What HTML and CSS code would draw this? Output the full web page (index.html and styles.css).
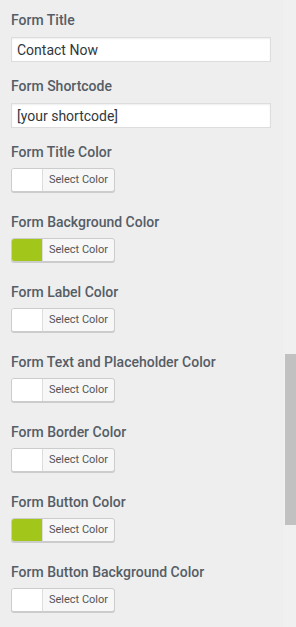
FILE: index.html
```html
<!DOCTYPE html>
<html lang="en">
<head>
    <meta charset="UTF-8">
    <meta name="viewport" content="width=device-width, initial-scale=1.0">
    <title>Form Settings</title>
    <link rel="stylesheet" href="styles.css">
</head>
<body>
    <div class="panel">
        <div class="settings">
            <div class="field">
                <label class="field-label">Form Title</label>
                <input type="text" class="text-input" value="Contact Now">
            </div>
            <div class="field">
                <label class="field-label">Form Shortcode</label>
                <input type="text" class="text-input" value="[your shortcode]">
            </div>

            <div class="field color-field">
                <label class="field-label">Form Title Color</label>
                <button type="button" class="color-btn"><span class="swatch"></span><span class="btn-text">Select Color</span></button>
            </div>
            <div class="field color-field">
                <label class="field-label">Form Background Color</label>
                <button type="button" class="color-btn"><span class="swatch green"></span><span class="btn-text">Select Color</span></button>
            </div>
            <div class="field color-field">
                <label class="field-label">Form Label Color</label>
                <button type="button" class="color-btn"><span class="swatch"></span><span class="btn-text">Select Color</span></button>
            </div>
            <div class="field color-field">
                <label class="field-label">Form Text and Placeholder Color</label>
                <button type="button" class="color-btn"><span class="swatch"></span><span class="btn-text">Select Color</span></button>
            </div>
            <div class="field color-field">
                <label class="field-label">Form Border Color</label>
                <button type="button" class="color-btn"><span class="swatch"></span><span class="btn-text">Select Color</span></button>
            </div>
            <div class="field color-field">
                <label class="field-label">Form Button Color</label>
                <button type="button" class="color-btn"><span class="swatch green"></span><span class="btn-text">Select Color</span></button>
            </div>
            <div class="field color-field">
                <label class="field-label">Form Button Background Color</label>
                <button type="button" class="color-btn"><span class="swatch"></span><span class="btn-text">Select Color</span></button>
            </div>
        </div>

        <div class="scroll-track">
            <div class="scroll-thumb"></div>
        </div>
    </div>
</body>
</html>
```

FILE: styles.css
```css
/* General Styles */
html, body {
    margin: 0;
    height: 100%;
    overflow: hidden;
}

body {
    font-family: Roboto, "Liberation Sans", sans-serif;
    background: #eeeeee;
}

.panel {
    display: flex;
    height: 627px;
}

.settings {
    width: 283px;
    padding: 11px 0 0 11px;
    box-sizing: border-box;
}

.field {
    margin-bottom: 15px;
}

.field-label {
    display: block;
    font-size: 14px;
    font-weight: 500;
    line-height: 18px;
    color: #555d66;
    margin-bottom: 8px;
}

.text-input {
    display: block;
    width: 260px;
    height: 25px;
    margin: 0;
    padding: 0 5px;
    border: 1px solid #dddddd;
    box-shadow: inset 0 1px 2px rgba(0, 0, 0, 0.07);
    background: #ffffff;
    font-family: Roboto, "Liberation Sans", sans-serif;
    font-size: 14px;
    color: #32373c;
    box-sizing: border-box;
    outline: none;
}

.color-field {
    margin-bottom: 0;
    height: 70px;
}

.color-field .field-label {
    margin-bottom: 7px;
}

.color-btn {
    display: flex;
    align-items: stretch;
    width: 104px;
    height: 24px;
    padding: 0;
    margin: 0;
    border: 1px solid #cccccc;
    border-radius: 3px;
    background: #f7f7f7;
    box-shadow: 0 1px 0 #cccccc;
    overflow: hidden;
    cursor: pointer;
    box-sizing: border-box;
}

.swatch {
    width: 30px;
    background: #ffffff;
    border-right: 1px solid #dddddd;
}

.swatch.green {
    background: #a3c61b;
}

.btn-text {
    flex: 1;
    font-family: Roboto, "Liberation Sans", sans-serif;
    font-size: 11px;
    line-height: 22px;
    color: #555555;
    text-align: center;
}

.scroll-track {
    width: 13px;
    background: #f0f0f0;
    padding-top: 354px;
}

.scroll-thumb {
    margin-left: 2px;
    height: 171px;
    background: #c1c1c1;
}
```
